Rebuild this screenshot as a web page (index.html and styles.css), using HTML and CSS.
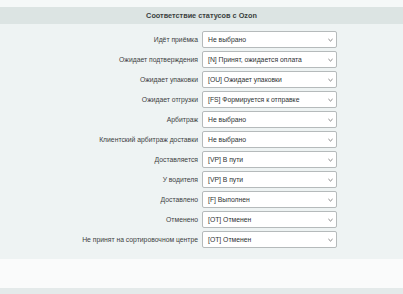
FILE: index.html
```html
<!DOCTYPE html>
<html lang="ru">
<head>
<meta charset="utf-8">
<title>Соответствие статусов с Ozon</title>
<link rel="stylesheet" href="styles.css">
</head>
<body>
<div class="top"></div>
<div class="header">Соответствие статусов с Ozon</div>
<div class="form">
  <div class="label">Идёт приёмка</div>
  <div class="select"><span>Не выбрано</span><svg class="chev" viewBox="0 0 6 4"><path d="M0.5 0.8 L3 3.2 L5.5 0.8"/></svg></div>
  <div class="label">Ожидает подтверждения</div>
  <div class="select"><span>[N] Принят, ожидается оплата</span><svg class="chev" viewBox="0 0 6 4"><path d="M0.5 0.8 L3 3.2 L5.5 0.8"/></svg></div>
  <div class="label">Ожидает упаковки</div>
  <div class="select"><span>[OU] Ожидает упаковки</span><svg class="chev" viewBox="0 0 6 4"><path d="M0.5 0.8 L3 3.2 L5.5 0.8"/></svg></div>
  <div class="label">Ожидает отгрузки</div>
  <div class="select"><span>[FS] Формируется к отправке</span><svg class="chev" viewBox="0 0 6 4"><path d="M0.5 0.8 L3 3.2 L5.5 0.8"/></svg></div>
  <div class="label">Арбитраж</div>
  <div class="select"><span>Не выбрано</span><svg class="chev" viewBox="0 0 6 4"><path d="M0.5 0.8 L3 3.2 L5.5 0.8"/></svg></div>
  <div class="label">Клиентский арбитраж доставки</div>
  <div class="select"><span>Не выбрано</span><svg class="chev" viewBox="0 0 6 4"><path d="M0.5 0.8 L3 3.2 L5.5 0.8"/></svg></div>
  <div class="label">Доставляется</div>
  <div class="select"><span>[VP] В пути</span><svg class="chev" viewBox="0 0 6 4"><path d="M0.5 0.8 L3 3.2 L5.5 0.8"/></svg></div>
  <div class="label">У водителя</div>
  <div class="select"><span>[VP] В пути</span><svg class="chev" viewBox="0 0 6 4"><path d="M0.5 0.8 L3 3.2 L5.5 0.8"/></svg></div>
  <div class="label">Доставлено</div>
  <div class="select"><span>[F] Выполнен</span><svg class="chev" viewBox="0 0 6 4"><path d="M0.5 0.8 L3 3.2 L5.5 0.8"/></svg></div>
  <div class="label">Отменено</div>
  <div class="select"><span>[OT] Отменен</span><svg class="chev" viewBox="0 0 6 4"><path d="M0.5 0.8 L3 3.2 L5.5 0.8"/></svg></div>
  <div class="label">Не принят на сортировочном центре</div>
  <div class="select"><span>[OT] Отменен</span><svg class="chev" viewBox="0 0 6 4"><path d="M0.5 0.8 L3 3.2 L5.5 0.8"/></svg></div>
</div>
<div class="blank"></div>
<div class="bottom"></div>
</body>
</html>
```

FILE: styles.css
```css
html, body {
  margin: 0;
  padding: 0;
}
body {
  width: 403px;
  height: 294px;
  overflow: hidden;
  background: #fafbfb;
  font-family: "Liberation Sans", Arial, sans-serif;
  color: #333;
}
.top {
  height: 7px;
  background: #f5f8f8;
}
.header {
  height: 17px;
  background: #dce4e3;
  display: flex;
  align-items: center;
  justify-content: center;
  font-size: 7.3px;
  font-weight: bold;
  color: #3a3f40;
}
.form {
  background: #eef3f3;
  padding: 7px 0 11px;
  display: grid;
  grid-template-columns: 198px 135px;
  column-gap: 4px;
  row-gap: 3px;
  grid-auto-rows: 17px;
}
.label {
  display: flex;
  align-items: center;
  justify-content: flex-end;
  font-size: 6.8px;
  color: #3d4142;
}
.select {
  box-sizing: border-box;
  background: #fff;
  border: 1px solid #b5babb;
  border-radius: 2px;
  display: flex;
  align-items: center;
  justify-content: space-between;
  padding: 0 3px 0 5px;
  font-size: 6.8px;
  color: #2e3233;
}
.chev {
  width: 5px;
  height: 4px;
  fill: none;
  stroke: #555;
  stroke-width: 0.9;
}
.blank {
  height: 29px;
  background: #fafbfb;
}
.bottom {
  height: 6px;
  background: #e4eaea;
}
```
